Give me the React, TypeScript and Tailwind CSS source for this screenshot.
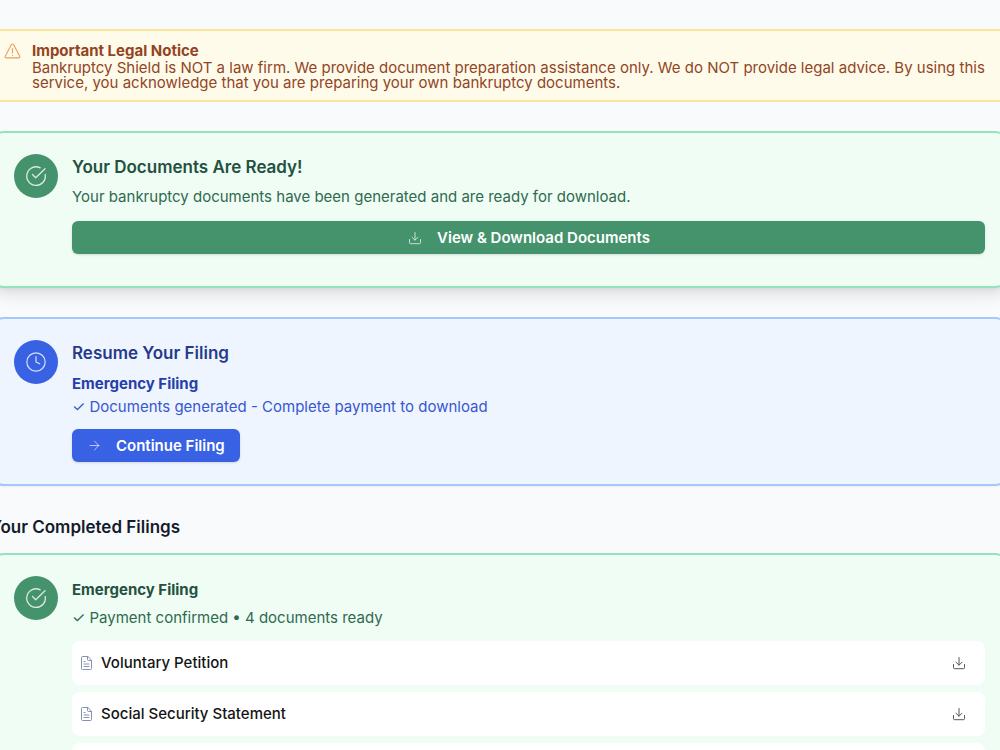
import type { ReactNode } from "react";
import { ArrowRight, Clock } from "lucide-react";

const documents = [
  "Voluntary Petition",
  "Social Security Statement",
  "Creditor Matrix",
  "Filing Fee Application",
];

function CheckCircleIcon() {
  return (
    <svg className="size-[22px]" viewBox="0 0 22 22" fill="none" stroke="currentColor" strokeWidth="1.3" strokeLinecap="round" strokeLinejoin="round" aria-hidden="true">
      <path d="M20.2 9.5A9.3 9.3 0 1 1 15.2 2.8" />
      <path d="m7.5 9.5 3.2 3.2L20 3.8" />
    </svg>
  );
}

function DownloadIcon() {
  return (
    <svg className="size-4 shrink-0" viewBox="0 0 16 16" fill="none" stroke="currentColor" strokeWidth="1" strokeLinecap="round" strokeLinejoin="round" aria-hidden="true">
      <path d="M2.5 9.5v3.2a1 1 0 0 0 1 1h9a1 1 0 0 0 1-1V9.5M8 2.5V10M5 7.2l3 3 3-3" />
    </svg>
  );
}

function DocumentIcon() {
  return (
    <svg className="h-4 w-[13px] shrink-0 text-[#8492ae]" viewBox="0 0 13 16" fill="none" stroke="currentColor" strokeWidth="1" strokeLinecap="round" strokeLinejoin="round" aria-hidden="true">
      <path d="M7.5 1.5h-5a1 1 0 0 0-1 1v11a1 1 0 0 0 1 1h8a1 1 0 0 0 1-1v-8zM7.5 1.5v3a1 1 0 0 0 1 1h3M4 6.500h1M4 9h5M4 11.500h5" />
    </svg>
  );
}

function WarningIcon() {
  return (
    <svg className="mt-0.5 size-[17px] shrink-0 text-[#e8a05c]" viewBox="0 0 18 18" fill="none" stroke="currentColor" strokeWidth="1.2" strokeLinecap="round" strokeLinejoin="round" aria-hidden="true">
      <path d="M7.9 1.7 1.3 14a1.2 1.2 0 0 0 1.1 1.8h13.2a1.2 1.2 0 0 0 1.1-1.8L10.1 1.7a1.25 1.25 0 0 0-2.2 0zM9 6v4.500M9 13v.1" />
    </svg>
  );
}

function StatusCard({ className, badge, icon, children }: { className: string; badge: string; icon: ReactNode; children: ReactNode }) {
  return (
    <section className={`flex gap-[14px] rounded-[14px] border-2 px-[22px] pt-[21px] ${className}`}>
      <div className={`flex size-[44px] shrink-0 items-center justify-center rounded-full text-white/80 ${badge}`}>{icon}</div>
      <div className="min-w-0 flex-1">{children}</div>
    </section>
  );
}

export default function App() {
  return (
    <div className="h-screen overflow-hidden bg-[#f9fafc] font-['Inter',sans-serif] text-[15px] leading-5">
      <main className="-mr-[9px] -ml-[10px] pt-[29px]">
        <section className="flex gap-[11px] border-2 border-[#fae69a] bg-[#fffbeb] px-3 py-[10px] text-[#92451f]">
          <WarningIcon />
          <div className="flex-1 pr-2">
            <h2 className="leading-[19px] font-bold">Important Legal Notice</h2>
            <p className="leading-[15px]">
              Bankruptcy Shield is NOT a law firm. We provide document preparation assistance only. We do NOT provide legal advice. By using this service, you acknowledge that you are preparing your own bankruptcy documents.
            </p>
          </div>
        </section>

        <StatusCard className="mt-[29px] border-[#94e3bd] bg-[#effdf4] pb-8 shadow-lg" badge="bg-[#44936c]" icon={<CheckCircleIcon />}>
          <h2 className="pt-0.5 text-[17px] leading-[22px] font-semibold text-[#24513f]">Your Documents Are Ready!</h2>
          <p className="mt-[9px] text-[#2f6a4f]">Your bankruptcy documents have been generated and are ready for download.</p>
          <button className="mt-[14px] flex h-[33px] w-full items-center justify-center gap-[14px] rounded-md bg-[#44936c] font-semibold text-white shadow-sm">
            <span className="text-white/70"><DownloadIcon /></span>
            View &amp; Download Documents
          </button>
        </StatusCard>

        <StatusCard className="mt-[29px] border-[#a5c8fb] bg-[#eff5fe] pb-[22px] shadow-xs" badge="bg-[#3862e3]" icon={<Clock className="size-[22px]" strokeWidth={1.3} />}>
          <h2 className="pt-0.5 text-[17px] leading-[22px] font-semibold text-[#263a8a]">Resume Your Filing</h2>
          <h3 className="mt-[10px] font-bold text-[#263fa8]">Emergency Filing</h3>
          <p className="mt-[3px] text-[#3857d0]">✓ Documents generated - Complete payment to download</p>
          <button className="mt-3 flex h-[33px] items-center gap-[14px] rounded-md bg-[#3862e3] px-[15px] font-semibold text-white shadow-sm">
            <ArrowRight className="size-[15px] text-white/70" strokeWidth={1.5} />
            Continue Filing
          </button>
        </StatusCard>

        <h2 className="mt-[30px] text-[17px] leading-[22px] font-semibold text-[#141a2c]">Your Completed Filings</h2>

        <StatusCard className="mt-[15px] border-[#94e3bd] bg-[#effdf4] pb-6" badge="bg-[#44936c]" icon={<CheckCircleIcon />}>
          <h3 className="pt-1 font-bold text-[#24513f]">Emergency Filing</h3>
          <p className="mt-2 text-[#2f6a4f]">✓ Payment confirmed • 4 documents ready</p>
          <ul className="mt-[13px] flex flex-col gap-[7px]">
            {documents.map((name) => (
              <li key={name} className="flex h-11 items-center gap-2 rounded-lg bg-white pr-[18px] pl-2 font-medium text-[#141414]">
                <DocumentIcon />
                <span className="flex-1">{name}</span>
                <button aria-label={`Download ${name}`} className="text-[#555]"><DownloadIcon /></button>
              </li>
            ))}
          </ul>
        </StatusCard>
      </main>
    </div>
  );
}
